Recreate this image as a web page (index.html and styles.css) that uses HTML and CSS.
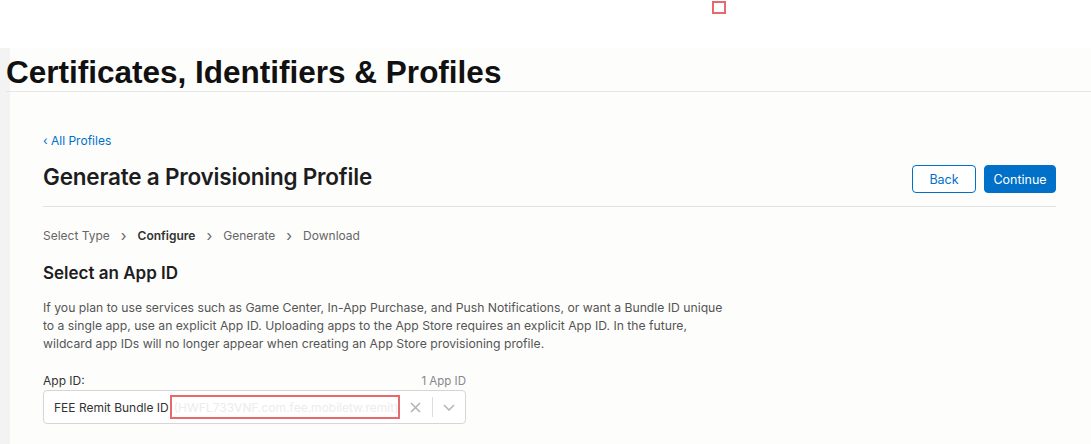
FILE: index.html
```html
<!DOCTYPE html>
<html lang="en">
<head>
    <meta charset="UTF-8">
    <title>Certificates, Identifiers &amp; Profiles</title>
    <link rel="stylesheet" href="styles.css">
</head>
<body>
    <div class="topbar">
        <span class="marker"></span>
    </div>

    <div class="page">
        <h1 class="page-title">Certificates, Identifiers &amp; Profiles</h1>

        <div class="content">
            <a class="back-link" href="#">&lsaquo; All Profiles</a>

            <div class="heading-row">
                <h2>Generate a Provisioning Profile</h2>
                <div class="actions">
                    <button class="btn btn-outline">Back</button>
                    <button class="btn btn-primary">Continue</button>
                </div>
            </div>

            <div class="steps">
                <span>Select Type</span>
                <span class="chev">&rsaquo;</span>
                <span class="current">Configure</span>
                <span class="chev">&rsaquo;</span>
                <span>Generate</span>
                <span class="chev">&rsaquo;</span>
                <span>Download</span>
            </div>

            <h3>Select an App ID</h3>
            <p class="intro">
                If you plan to use services such as Game Center, In-App Purchase, and Push Notifications, or want a Bundle ID unique<br>
                to a single app, use an explicit App ID. Uploading apps to the App Store requires an explicit App ID. In the future,<br>
                wildcard app IDs will no longer appear when creating an App Store provisioning profile.
            </p>

            <div class="field">
                <div class="field-head">
                    <label>App ID:</label>
                    <span class="count">1 App ID</span>
                </div>
                <div class="select">
                    <span class="value">FEE Remit Bundle ID</span>
                    <span class="value-id">(HWFL733VNF.com.fee.mobiletw.remit)</span>
                    <span class="clear">
                        <svg width="11" height="11" viewBox="0 0 11 11"><path d="M1 1L10 10M10 1L1 10" stroke="#b4b4b4" stroke-width="1.6" fill="none"/></svg>
                    </span>
                    <span class="divider"></span>
                    <span class="caret">
                        <svg width="12" height="7" viewBox="0 0 12 7"><path d="M1 1L6 6L11 1" stroke="#b4b4b4" stroke-width="1.5" fill="none"/></svg>
                    </span>
                </div>
            </div>
        </div>
    </div>
</body>
</html>
```

FILE: styles.css
```css
body {
    margin: 0;
    font-family: Inter, "Liberation Sans", Arial, sans-serif;
    color: #333;
    background: #fff;
}
.topbar {
    height: 48px;
    background: #fff;
    position: relative;
}
.marker {
    position: absolute;
    left: 712px;
    top: 1px;
    width: 10px;
    height: 9px;
    border: 2px solid #e8696b;
}
.page {
    background: #fdfdfc;
    box-shadow: inset 10px 0 #f3f3f3;
    min-height: 396px;
}
.page-title {
    margin: 0 0 0 6px;
    padding: 9px 0 4px;
    font-family: "Liberation Sans", Arial, sans-serif;
    font-size: 31.5px;
    font-weight: bold;
    color: #111;
    border-bottom: 1px solid #e6e6e6;
    line-height: 30px;
}
.content {
    padding: 0 35px 0 43px;
}
.back-link {
    display: inline-block;
    margin-top: 41px;
    font-size: 12px;
    color: #0070c9;
    text-decoration: none;
}
.heading-row {
    display: flex;
    justify-content: space-between;
    align-items: center;
    margin-top: 10px;
    padding-bottom: 13px;
    border-bottom: 1px solid #e2e2e2;
}
.heading-row h2 {
    margin: 0;
    font-size: 22.5px;
    font-weight: 600;
    color: #1d1d1f;
    letter-spacing: -0.2px;
}
.actions {
    display: flex;
    gap: 8px;
    margin-top: 6px;
}
.btn {
    height: 28px;
    padding: 0;
    font-family: inherit;
    font-size: 12.5px;
    border-radius: 4px;
    cursor: pointer;
}
.btn-outline {
    width: 64px;
    background: #fff;
    color: #0070c9;
    border: 1px solid #0070c9;
}
.btn-primary {
    width: 72px;
    background: #0070c9;
    color: #fff;
    border: 1px solid #0070c9;
}
.steps {
    display: flex;
    gap: 11px;
    margin-top: 21px;
    font-size: 12px;
    color: #666;
}
.steps .chev {
    color: #666;
    font-size: 15px;
    line-height: 15px;
}
.steps .current {
    font-weight: 600;
    color: #333;
}
h3 {
    margin: 20px 0 0;
    font-size: 17px;
    font-weight: 600;
    color: #1d1d1f;
}
.intro {
    margin: 16px 0 0;
    font-size: 12.2px;
    line-height: 18px;
    color: #555;
    white-space: nowrap;
}
.field {
    width: 423px;
    margin-top: 20px;
}
.field-head {
    display: flex;
    justify-content: space-between;
    align-items: flex-end;
}
.field-head label {
    font-size: 12px;
    color: #333;
}
.count {
    font-size: 11.5px;
    color: #888;
}
.select {
    display: flex;
    align-items: center;
    height: 32px;
    margin-top: 2px;
    padding-left: 10px;
    border: 1px solid #d6d6d6;
    border-radius: 4px;
    background: #fff;
    font-size: 12px;
}
.value {
    color: #333;
}
.value-id {
    display: flex;
    align-items: center;
    width: 224px;
    height: 20px;
    margin-left: 1px;
    padding-left: 2px;
    border: 2px solid #e8696b;
    color: #ececec;
    white-space: nowrap;
    overflow: hidden;
}
.clear {
    display: flex;
    margin-left: 4px;
    padding: 0 6px;
}
.divider {
    width: 1px;
    height: 20px;
    margin-left: 5px;
    background: #ddd;
}
.caret {
    display: flex;
    margin-left: 10px;
}
```
